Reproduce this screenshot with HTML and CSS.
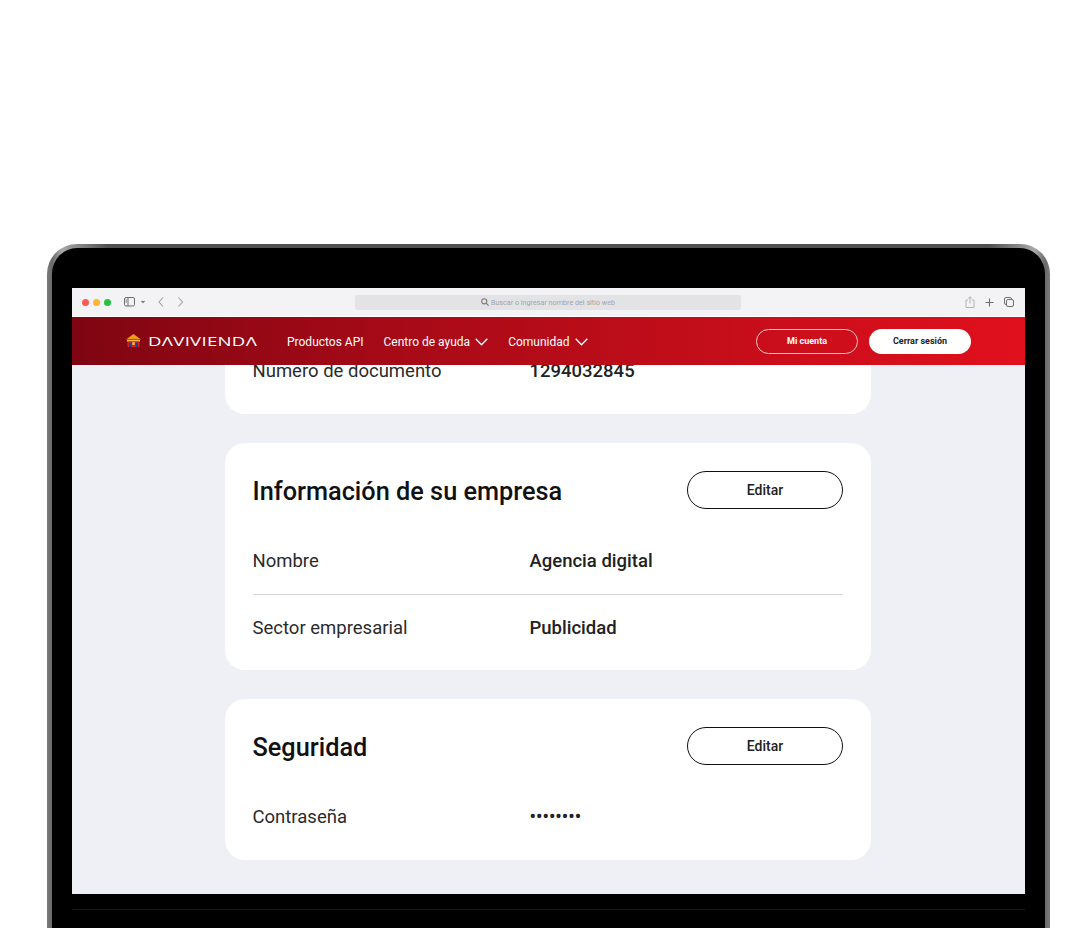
FILE: index.html
```html
<!DOCTYPE html>
<html lang="es">
<head>
    <meta charset="UTF-8">
    <meta name="viewport" content="width=device-width, initial-scale=1.0">
    <title>Davivienda - Mi cuenta</title>
    <link rel="stylesheet" href="styles.css">
</head>
<body>
    <!-- Laptop frame -->
    <div class="laptop">
        <div class="screen">
            <!-- Safari toolbar -->
            <div class="browser-bar">
                <div class="traffic">
                    <span class="dot dot-red"></span>
                    <span class="dot dot-yellow"></span>
                    <span class="dot dot-green"></span>
                </div>
                <svg class="tool-sidebar" width="22" height="10" viewBox="0 0 22 10" fill="none" stroke="#6f6f72" stroke-width="1">
                    <rect x="0.5" y="0.5" width="10" height="8.5" rx="1.5"/>
                    <path d="M4 0.5V9M1.5 3h1.5M1.5 5h1.5"/>
                    <path d="M17.5 4l1.5 1.5L20.500 4" stroke-width="1.100"/>
                </svg>
                <svg class="tool-nav" width="26" height="10" viewBox="0 0 26 10" fill="none" stroke="#a2a2a5" stroke-width="1.100">
                    <path d="M5 0.500L1 5l4 4.500"/>
                    <path d="M20.500 0.500l4 4.500-4 4.500"/>
                </svg>
                <div class="address">
                    <svg width="8" height="8" viewBox="0 0 9 9" fill="none" stroke="#77777a" stroke-width="1.200">
                        <circle cx="3.700" cy="3.700" r="2.900"/>
                        <path d="M6 6l2.500 2.500"/>
                    </svg>
                    <span>Buscar o ingresar nombre del sitio web</span>
                </div>
                <div class="tools-right">
                    <svg width="10" height="12" viewBox="0 0 10 12" fill="none" stroke="#b4b4b7" stroke-width="1">
                        <path d="M3 4H1v7.500h8V4H7"/>
                        <path d="M5 7.500V0.800M3.200 2.500L5 0.800l1.800 1.700"/>
                    </svg>
                    <svg width="9" height="9" viewBox="0 0 9 9" fill="none" stroke="#6f6f72" stroke-width="1.100">
                        <path d="M4.500 0.500v8M0.500 4.500h8"/>
                    </svg>
                    <svg width="10" height="10" viewBox="0 0 10 10" fill="none" stroke="#6f6f72" stroke-width="1">
                        <rect x="0.500" y="0.500" width="7" height="7" rx="1.500"/>
                        <rect x="2.500" y="2.500" width="7" height="7" rx="1.500" fill="#f3f3f5"/>
                    </svg>
                </div>
            </div>

            <!-- Site header -->
            <header class="site-header">
                <div class="logo">
                    <svg width="15" height="14" viewBox="0 0 15 14">
                        <path d="M7.500 0L15 5.500H0z" fill="#f29a1f"/>
                        <rect x="1" y="6" width="13" height="1.600" fill="#f6b73c"/>
                        <rect x="1.500" y="7.600" width="12" height="5.400" rx="1.500" fill="#d8232a"/>
                        <rect x="3" y="8.500" width="2.500" height="4.500" fill="#1d3f8f"/>
                        <rect x="9.500" y="8.500" width="2.500" height="4.500" fill="#1d3f8f"/>
                        <rect x="6.300" y="8.200" width="2.400" height="2.800" fill="#f6c52f"/>
                    </svg>
                    <span class="logo-text" aria-label="Davivienda">DΛVIVIENDΛ</span>
                </div>
                <nav class="main-nav">
                    <a href="#">Productos API</a>
                    <a href="#">Centro de ayuda
                        <svg width="13" height="8" viewBox="0 0 13 8" fill="none" stroke="#fff" stroke-width="1.300"><path d="M0.700 0.800L6.500 6.800l5.800-6"/></svg>
                    </a>
                    <a href="#">Comunidad
                        <svg width="13" height="8" viewBox="0 0 13 8" fill="none" stroke="#fff" stroke-width="1.300"><path d="M0.700 0.800L6.500 6.800l5.800-6"/></svg>
                    </a>
                </nav>
                <div class="header-actions">
                    <button class="btn-outline">Mi cuenta</button>
                    <button class="btn-white">Cerrar sesión</button>
                </div>
            </header>

            <!-- Profile cards, scrolled down -->
            <main class="content">
                <section class="card">
                    <div class="row">
                        <span class="label">Numero de documento</span>
                        <span class="value">1294032845</span>
                    </div>
                </section>

                <section class="card">
                    <div class="card-head">
                        <h2>Información de su empresa</h2>
                        <button class="btn-edit">Editar</button>
                    </div>
                    <div class="row row-line">
                        <span class="label">Nombre</span>
                        <span class="value">Agencia digital</span>
                    </div>
                    <div class="row row-after-line">
                        <span class="label">Sector empresarial</span>
                        <span class="value">Publicidad</span>
                    </div>
                </section>

                <section class="card">
                    <div class="card-head">
                        <h2>Seguridad</h2>
                        <button class="btn-edit">Editar</button>
                    </div>
                    <div class="row">
                        <span class="label">Contraseña</span>
                        <span class="value">••••••••</span>
                    </div>
                </section>
            </main>
        </div>
        <div class="laptop-base"></div>
    </div>
</body>
</html>
```

FILE: styles.css
```css
/* General styling */
html,
body {
    height: 100%;
}

body {
    margin: 0;
    background-color: #fff;
    font-family: Roboto, sans-serif;
    color: #1a1a1a;
    overflow: hidden;
}

button {
    font-family: Roboto, sans-serif;
    cursor: pointer;
}

/* Laptop frame */
.laptop {
    box-sizing: border-box;
    width: 1003px;
    height: 700px;
    margin: 244px 0 0 47px;
    padding: 40px 20px 0 20px;
    background:
        linear-gradient(#000, #000) padding-box,
        linear-gradient(90deg, #7a7a7a 0%, #6a6a6a 0.5%, #a8a8a8 1.5%, #505050 6%, #505050 94%, #a8a8a8 98.5%, #6a6a6a 99.5%, #7a7a7a 100%) border-box;
    border: solid transparent;
    border-width: 4px 5px 0 5px;
    border-radius: 30px 30px 0 0;
}

.screen {
    height: 606px;
    display: flex;
    flex-direction: column;
    overflow: hidden;
    background-color: #eff0f6;
}

.laptop-base {
    height: 15px;
    border-bottom: 1px solid #161616;
}

/* Browser toolbar */
.browser-bar {
    flex: none;
    box-sizing: border-box;
    height: 29px;
    display: flex;
    align-items: center;
    padding: 0 11px 0 10px;
    background-color: #f3f3f5;
    border-bottom: 1px solid #fff;
}

.traffic {
    display: flex;
    gap: 4px;
}

.dot {
    width: 7px;
    height: 7px;
    border-radius: 50%;
}

.dot-red { background-color: #fb5a55; }
.dot-yellow { background-color: #fcb52c; }
.dot-green { background-color: #27c23f; }

.tool-sidebar {
    margin-left: 13px;
}

.tool-nav {
    margin-left: 12px;
}

.address {
    width: 386px;
    height: 15px;
    margin-left: 171px;
    display: flex;
    align-items: center;
    justify-content: center;
    gap: 2px;
    background-color: #e3e3e5;
    border-radius: 3px;
    font-size: 7.200px;
    color: #a3a3a6;
}

.tools-right {
    margin-left: auto;
    display: flex;
    align-items: center;
    gap: 10px;
}

/* Site header */
.site-header {
    flex: none;
    height: 48px;
    display: flex;
    align-items: center;
    padding: 0 54px;
    background: linear-gradient(90deg, #7f0512 0%, #a80a17 35%, #c20d1a 65%, #e1101d 100%);
    color: #fff;
    z-index: 1;
}

.logo {
    display: flex;
    align-items: center;
    gap: 7px;
}

/* wide logo lettering, stretched from the left */
.logo-text {
    width: 109px;
    font-family: "Open Sans", sans-serif;
    font-size: 13px;
    letter-spacing: 0.2px;
    white-space: nowrap;
    transform: scaleX(1.430);
    transform-origin: left center;
}

.main-nav {
    display: flex;
    gap: 20px;
    margin-left: 30px;
    font-size: 12px;
}

.main-nav a {
    display: flex;
    align-items: center;
    gap: 5px;
    padding-top: 1px;
    color: #fff;
    text-decoration: none;
}

.header-actions {
    margin-left: auto;
    display: flex;
    gap: 11px;
}

.btn-outline,
.btn-white {
    width: 102px;
    height: 25px;
    padding: 0;
    border-radius: 13px;
    font-size: 9px;
    font-weight: 700;
}

.btn-outline {
    background: transparent;
    color: #fff;
    border: 1px solid #f3c3c6;
}

.btn-white {
    background-color: #fff;
    color: #222;
    border: none;
}

/* Cards */
.content {
    flex: 1;
    min-height: 0;
    display: flex;
    flex-direction: column;
    justify-content: flex-end;
    align-items: center;
    gap: 29px;
    padding: 0 1px 34px 0;
    overflow: hidden;
}

.card {
    flex: none;
    box-sizing: border-box;
    width: 646px;
    padding: 28px 28px 10px 27.500px;
    background-color: #fff;
    border-radius: 20px;
}

.card-head {
    display: flex;
    justify-content: space-between;
    align-items: center;
    margin-bottom: 19px;
}

.card-head h2 {
    margin: 0;
    padding-top: 2px;
    font-size: 25.300px;
    font-weight: 500;
    color: #111;
}

.btn-edit {
    width: 156px;
    height: 38px;
    padding: 0;
    background-color: #fff;
    border: 1px solid #111;
    border-radius: 19px;
    font-size: 14px;
    font-weight: 500;
    color: #222;
}

.row {
    display: flex;
    align-items: center;
    height: 66px;
    font-size: 18.500px;
}

.row-line {
    border-bottom: 1px solid #d5d6da;
}

.row-after-line {
    height: 65px;
}

.label {
    width: 277px;
    color: #2b2b2b;
}

.value {
    font-weight: 500;
    color: #222;
}
```
